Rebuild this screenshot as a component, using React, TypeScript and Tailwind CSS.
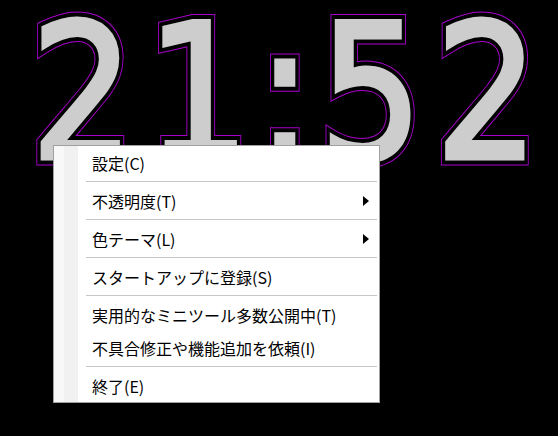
import React from "react";

type Entry = { label: string; sub?: boolean } | "sep";

const entries: Entry[] = [
  { label: "設定(C)" },
  "sep",
  { label: "不透明度(T)", sub: true },
  "sep",
  { label: "色テーマ(L)", sub: true },
  "sep",
  { label: "スタートアップに登録(S)" },
  "sep",
  { label: "実用的なミニツール多数公開中(T)" },
  { label: "不具合修正や機能追加を依頼(I)" },
  "sep",
  { label: "終了(E)" },
];

function Glyphs({ time }: { time: string }) {
  return (
    <>
      {time.split("").map((ch, i) => (
        <span key={i} className={ch === ":" ? "-mx-[6px]" : ""}>
          {ch}
        </span>
      ))}
    </>
  );
}

function Clock({ time }: { time: string }) {
  const base =
    "font-['DejaVu_Sans',sans-serif] text-[188px] leading-[186px] tracking-[15px] whitespace-nowrap [paint-order:stroke_fill]";
  return (
    <div className="pl-[31px]">
      <div className="origin-left scale-x-[0.86]">
        <div className="relative inline-block">
          {/* magenta halo */}
          <div className={`${base} text-[#a800cc] [-webkit-text-stroke:15px_#a800cc]`}>
            <Glyphs time={time} />
          </div>
          {/* black outline */}
          <div className={`${base} absolute inset-0 text-black [-webkit-text-stroke:13px_#000]`}>
            <Glyphs time={time} />
          </div>
          {/* face */}
          <div className={`${base} absolute inset-0 text-[#cdcdcd] [-webkit-text-stroke:5px_#cdcdcd]`}>
            <Glyphs time={time} />
          </div>
        </div>
      </div>
    </div>
  );
}

function Arrow() {
  return (
    <svg width="6" height="10" viewBox="0 0 6 10" className="block">
      <polygon points="0,0 6,5 0,10" fill="#000" />
    </svg>
  );
}

function ContextMenu() {
  return (
    <div className="absolute left-[53px] top-[145px] w-[327px] border border-[#a0a0a0] bg-[linear-gradient(to_right,#f8f8f8_0,#f8f8f8_10px,#f1f1f1_10px,#f1f1f1_24px,#ffffff_24px)] font-['Noto_Sans_CJK_JP',sans-serif] text-[16px] text-black">
      {entries.map((e, i) =>
        e === "sep" ? (
          <div key={i} className="h-[5px] pl-[32px] pr-[2px] pt-[2px]">
            <div className="h-px bg-[#c6c6c6]" />
          </div>
        ) : (
          <div key={i} className="flex h-[33px] items-center justify-between pl-[38px] pr-[10px]">
            <span className="leading-none">{e.label}</span>
            {e.sub && <Arrow />}
          </div>
        )
      )}
    </div>
  );
}

export default function App() {
  return (
    <div className="relative h-[436px] w-[558px] overflow-hidden bg-black">
      <Clock time="21:52" />
      <ContextMenu />
    </div>
  );
}
